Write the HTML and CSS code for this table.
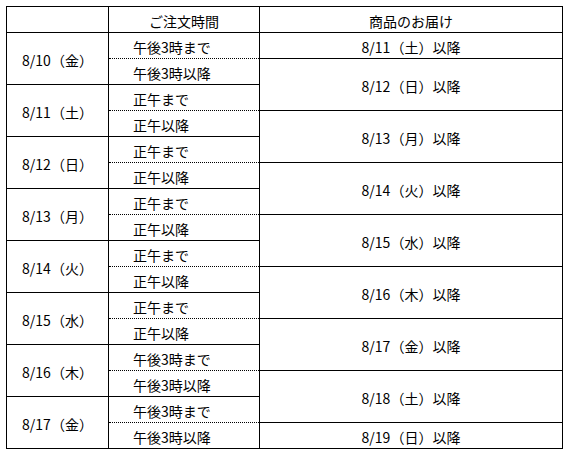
FILE: index.html
```html
<!DOCTYPE html>
<html lang="ja">
<head>
<meta charset="utf-8">
<title>お届け日一覧</title>
<link rel="stylesheet" href="styles.css">
</head>
<body>
<table class="schedule">
  <colgroup>
    <col class="c-date">
    <col class="c-time">
    <col class="c-deliv">
  </colgroup>
  <thead>
    <tr>
      <th class="date"></th>
      <th class="time-head">ご注文時間</th>
      <th class="deliv">商品のお届け</th>
    </tr>
  </thead>
  <tbody>
    <tr>
      <td class="date" rowspan="2">8/10（金）</td>
      <td class="time first">午後3時まで</td>
      <td class="deliv">8/11（土）以降</td>
    </tr>
    <tr>
      <td class="time second">午後3時以降</td>
      <td class="deliv" rowspan="2">8/12（日）以降</td>
    </tr>
    <tr>
      <td class="date" rowspan="2">8/11（土）</td>
      <td class="time first">正午まで</td>
    </tr>
    <tr>
      <td class="time second">正午以降</td>
      <td class="deliv" rowspan="2">8/13（月）以降</td>
    </tr>
    <tr>
      <td class="date" rowspan="2">8/12（日）</td>
      <td class="time first">正午まで</td>
    </tr>
    <tr>
      <td class="time second">正午以降</td>
      <td class="deliv" rowspan="2">8/14（火）以降</td>
    </tr>
    <tr>
      <td class="date" rowspan="2">8/13（月）</td>
      <td class="time first">正午まで</td>
    </tr>
    <tr>
      <td class="time second">正午以降</td>
      <td class="deliv" rowspan="2">8/15（水）以降</td>
    </tr>
    <tr>
      <td class="date" rowspan="2">8/14（火）</td>
      <td class="time first">正午まで</td>
    </tr>
    <tr>
      <td class="time second">正午以降</td>
      <td class="deliv" rowspan="2">8/16（木）以降</td>
    </tr>
    <tr>
      <td class="date" rowspan="2">8/15（水）</td>
      <td class="time first">正午まで</td>
    </tr>
    <tr>
      <td class="time second">正午以降</td>
      <td class="deliv" rowspan="2">8/17（金）以降</td>
    </tr>
    <tr>
      <td class="date" rowspan="2">8/16（木）</td>
      <td class="time first">午後3時まで</td>
    </tr>
    <tr>
      <td class="time second">午後3時以降</td>
      <td class="deliv" rowspan="2">8/18（土）以降</td>
    </tr>
    <tr>
      <td class="date" rowspan="2">8/17（金）</td>
      <td class="time first">午後3時まで</td>
    </tr>
    <tr>
      <td class="time second">午後3時以降</td>
      <td class="deliv">8/19（日）以降</td>
    </tr>
  </tbody>
</table>
</body>
</html>
```

FILE: styles.css
```css
html, body {
  margin: 0;
  padding: 0;
  background: #ffffff;
}

body {
  padding: 6px 0 0 6px;
  font-family: "Noto Sans CJK JP", "Noto Sans", sans-serif;
  font-size: 14px;
  color: #000000;
}

.schedule {
  border-collapse: collapse;
  table-layout: fixed;
  width: 556px;
}

.c-date { width: 102px; }
.c-time { width: 151px; }
.c-deliv { width: 303px; }

.schedule tr {
  height: 26px;
}

.schedule th,
.schedule td {
  border: 1px solid #000000;
  padding: 2px 0 0 0;
  height: 26px;
  box-sizing: border-box;
  font-weight: normal;
  line-height: 20px;
  white-space: nowrap;
  vertical-align: middle;
}

.schedule .date,
.schedule .deliv,
.schedule .time-head {
  text-align: center;
}

.schedule td.time {
  text-align: left;
  padding-left: 24px;
}

.schedule td.first {
  border-bottom: 1px dotted #000000;
}

.schedule td.second {
  border-top: 1px dotted #000000;
}
```
